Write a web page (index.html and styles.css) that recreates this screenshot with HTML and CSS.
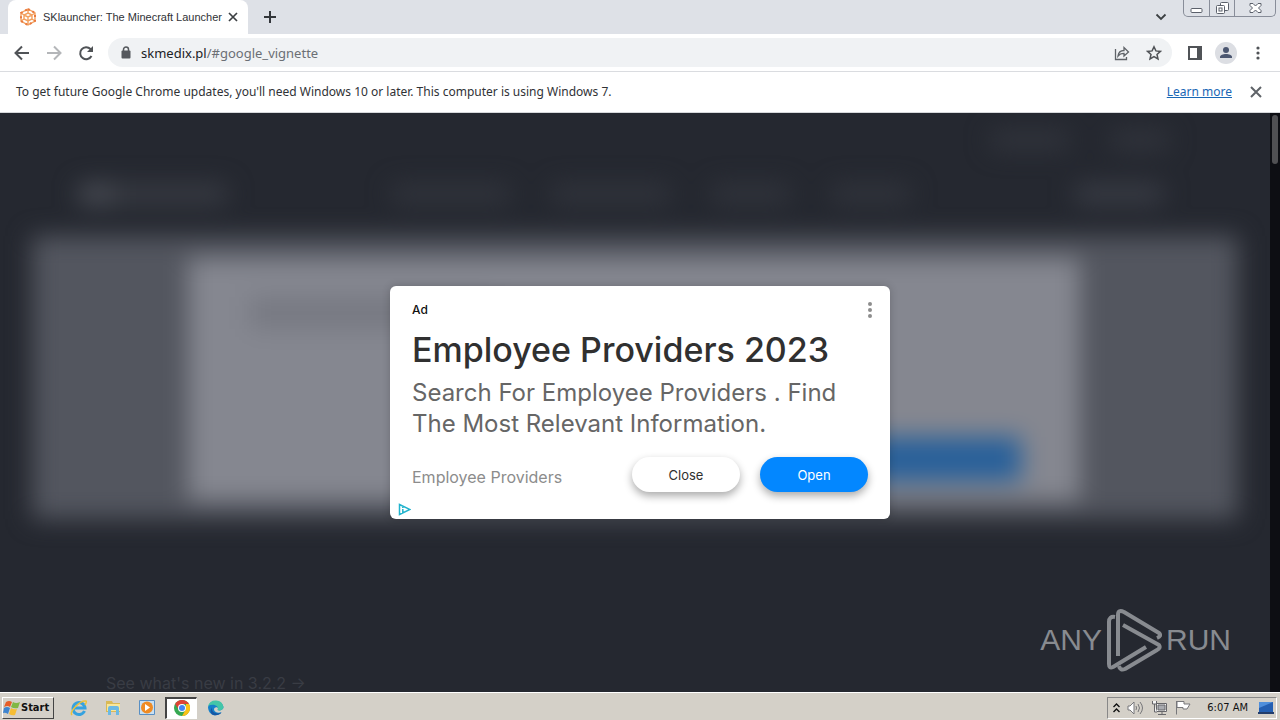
FILE: index.html
```html
<!DOCTYPE html>
<html lang="en">
<head>
<meta charset="utf-8">
<meta name="viewport" content="width=device-width, initial-scale=1">
<title>SKlauncher: The Minecraft Launcher</title>
<link rel="stylesheet" href="styles.css">
</head>
<body>
<header class="tabstrip">
  <div class="tab">
    <svg class="favicon" viewBox="0 0 18 18" width="18" height="18" fill="none" stroke="#f3a15f" stroke-width="1.4"><path d="M9 1l7 4v8l-7 4-7-4V5zM9 5l4 2v4l-4 2-4-2V7zM9 1v4M16 5l-3 2M16 13l-3-2M9 17v-4M2 13l3-2M2 5l3 2M9 9l4-2M9 9L5 7M9 9v4"/><path stroke="#e9793e" stroke-width="2" stroke-dasharray="2 3" d="M9 1l7 4v8l-7 4-7-4V5z"/></svg>
    <span class="tab-title">SKlauncher: The Minecraft Launcher</span>
    <button class="icon-btn" aria-label="Close tab"><svg width="10" height="10" viewBox="0 0 10 10" stroke="#3c4043" stroke-width="1.7"><path d="M1 1l8 8M9 1L1 9"/></svg></button>
  </div>
  <button class="icon-btn new-tab" aria-label="New tab"><svg width="14" height="14" viewBox="0 0 14 14" stroke="#33363b" stroke-width="2"><path d="M7 1v12M1 7h12"/></svg></button>
  <div class="window-tools">
    <button class="icon-btn search-tabs" aria-label="Search tabs"><svg width="12" height="8" viewBox="0 0 12 8" fill="none" stroke="#3c4043" stroke-width="1.8"><path d="M1.500 1.500L6 6l4.500-4.500"/></svg></button>
    <div class="window-controls">
      <button class="win-btn" aria-label="Minimize"><svg width="13" height="16" viewBox="0 0 13 16" fill="#fff" stroke="#5b606b"><rect x="1" y="8.500" width="11" height="4" rx="1"/></svg></button>
      <button class="win-btn" aria-label="Restore"><svg width="13" height="16" viewBox="0 0 13 16" fill="#fff" stroke="#5b606b"><rect x="4.500" y="2.500" width="8" height="8" rx="1"/><rect x=".5" y="5.500" width="8" height="8" rx="1"/><rect x="3" y="8" width="3" height="3"/></svg></button>
      <button class="win-btn win-close" aria-label="Close"><svg width="13" height="16" viewBox="0 0 13 16" fill="#fff" stroke="#5b606b"><path d="M1 3.500h3L6.500 6 9 3.500h3v2L9.500 8l2.500 2.500v2H9L6.500 10 4 12.500H1v-2L3.500 8 1 5.500z"/></svg></button>
    </div>
  </div>
</header>
<nav class="toolbar">
  <button class="icon-btn" aria-label="Back"><svg width="16" height="16" viewBox="0 0 16 16" fill="none" stroke="#505357" stroke-width="2"><path d="M15 8H2M8 1.500L1.500 8 8 14.500"/></svg></button>
  <button class="icon-btn" aria-label="Forward"><svg width="16" height="16" viewBox="0 0 16 16" fill="none" stroke="#b4b6b9" stroke-width="2"><path d="M1 8h13M8 1.500L14.500 8 8 14.500"/></svg></button>
  <button class="icon-btn" aria-label="Reload"><svg width="16" height="16" viewBox="0 0 16 16" fill="none" stroke="#505357" stroke-width="2"><path d="M13.500 11A6 6 0 1 1 12.500 4L14 6"/><path fill="#505357" stroke="none" d="M15 1v6H9z"/></svg></button>
  <div class="omnibox">
    <svg class="lock" width="10" height="13" viewBox="0 0 10 13"><rect y="4.500" x=".5" width="9" height="8" rx="1" fill="#55585d"/><path d="M2.500 5V3.500a2.500 2.500 0 0 1 5 0V5" fill="none" stroke="#55585d" stroke-width="1.500"/></svg>
    <span class="url">skmedix.pl<span class="url-path">/#google_vignette</span></span>
    <button class="icon-btn" aria-label="Share"><svg width="16" height="16" viewBox="0 0 16 16" fill="none" stroke="#5f6368" stroke-width="1.300"><path d="M1.500 4v10.500h11V12M4 11c.5-4 2.500-5.500 6-5.500V2.500L14.500 7 10 11V8.300C7.500 8.300 5.500 9 4 11z"/></svg></button>
    <button class="icon-btn" aria-label="Bookmark"><svg width="16" height="16" viewBox="0 0 16 16" fill="none" stroke="#505357" stroke-width="1.500"><path d="M8 1.800l1.900 4.100 4.500.5-3.400 3 1 4.500L8 11.600l-4 2.300 1-4.500-3.400-3 4.500-.5z"/></svg></button>
  </div>
  <button class="icon-btn" aria-label="Side panel"><svg width="14" height="14" viewBox="0 0 14 14"><path fill="none" stroke="#505357" stroke-width="2" d="M1 1h12v12H1z"/><path fill="#505357" d="M9 1h5v12H9z"/></svg></button>
  <button class="icon-btn profile" aria-label="Profile"><svg width="22" height="22" viewBox="0 0 22 22"><circle cx="11" cy="11" r="11" fill="#dcdee3"/><circle cx="11" cy="8" r="3" fill="#4b5670"/><path fill="#4b5670" d="M5 16v-1c0-2 3-3 6-3s6 1 6 3v1z"/></svg></button>
  <button class="icon-btn" aria-label="Chrome menu"><svg width="4" height="14" viewBox="0 0 4 14" fill="#505357"><circle cx="2" cy="2" r="1.600"/><circle cx="2" cy="7" r="1.600"/><circle cx="2" cy="12" r="1.600"/></svg></button>
</nav>
<aside class="infobar">
  <span class="infobar-text">To get future Google Chrome updates, you'll need Windows 10 or later. This computer is using Windows 7.</span>
  <a href="#">Learn more</a>
  <button class="icon-btn" aria-label="Dismiss"><svg width="12" height="12" viewBox="0 0 12 12" stroke="#5f6368" stroke-width="2"><path d="M1 1l10 10M11 1L1 11"/></svg></button>
</aside>
<main class="viewport">
  <div class="page">
    <div class="page-blur" aria-hidden="true">
      <div class="top-links"><i class="smudge w80"></i><i class="smudge w60"></i></div>
      <div class="site-nav">
        <i class="smudge brand"></i>
        <div class="nav-links"><i class="smudge w120"></i><i class="smudge w120"></i><i class="smudge w80"></i><i class="smudge w80"></i></div>
        <i class="smudge w90"></i>
      </div>
      <section class="hero">
        <div class="hero-card"><i class="hero-title"></i><i class="hero-btn"></i></div>
      </section>
    </div>
    <a class="whats-new" href="#">See what's new in 3.2.2 →</a>
  </div>
  <div class="scrollbar"><div class="thumb"></div></div>
  <div class="vignette">
    <section class="ad" role="dialog" aria-label="Ad">
      <div class="ad-top"><span class="ad-label">Ad</span>
        <button class="icon-btn" aria-label="Ad options"><svg width="4" height="16" viewBox="0 0 4 16" fill="#8d8d8d"><circle cx="2" cy="2" r="2"/><circle cx="2" cy="8" r="2"/><circle cx="2" cy="14" r="2"/></svg></button></div>
      <h1>Employee Providers 2023</h1>
      <p>Search For Employee Providers . Find The Most Relevant Information.</p>
      <div class="ad-actions"><span class="advertiser">Employee Providers</span><button class="pill">Close</button><button class="pill primary">Open</button></div>
      <svg class="adchoices" width="13" height="13" viewBox="0 0 13 13" fill="none" stroke="#21b3cd" stroke-width="1.500"><path d="M1.500 1.500v10L12 6.500zM4.800 6v4M4.800 4v1"/></svg>
    </section>
  </div>
  <div class="watermark">
    <span>ANY</span>
    <svg width="56" height="64" viewBox="0 0 56 64" fill="none" stroke="#888b90" stroke-width="4" stroke-linejoin="round"><path d="M9 9q-6-1-6 5v42q0 5 4 3l33-20"/><path d="M12 48V7q0-6 6-3l35 21q3 3-2 5"/><path d="M17 17l36 20q2 3-2 5L19 61q-5 2-6-3"/></svg>
    <span>RUN</span>
  </div>
</main>
<footer class="taskbar">
  <button class="start"><svg width="17" height="16" viewBox="0 0 17 16"><path fill="#e65d29" d="M3 2q3-2 6 0L7 7Q5 5 1 7z"/><path fill="#80b845" d="M10 2q3 2 7 0l-2 6q-4 1-7-1z"/><path fill="#3e84cf" d="M1 8q3-2 6 0l-2 6q-3-2-5-1z"/><path fill="#f6bd33" d="M8 8q3 2 6 1l-2 6q-3 1-6-1z"/></svg>Start</button>
  <button class="task" aria-label="Internet Explorer"><svg width="18" height="18" viewBox="0 0 18 18" fill="none"><path d="M14.500 12A6 6 0 1 1 15 9H4" stroke="#35a2df" stroke-width="3"/><path d="M2 16C-1 13 10 1 16 2q1 1-1 4" stroke="#edc239" stroke-width="1.500"/></svg></button>
  <button class="task" aria-label="File Explorer"><svg width="17" height="17" viewBox="0 0 17 17"><path fill="#d9b956" d="M1 2h6l1 2h7v9H1z"/><path fill="#f8e69a" d="M2 5h13v7H2z"/><path fill="#6bb9e4" d="M3 9q0-2 2-2h7q2 0 2 2v7h-3v-5H6v5H3z"/></svg></button>
  <button class="task" aria-label="Media Player"><svg width="16" height="17" viewBox="0 0 16 17"><path fill="#c9e0f2" stroke="#588fc4" d="M.5 1.500h15v14H.5z"/><circle cx="8" cy="8.500" r="6" fill="#ef8b24"/><path fill="#fff" d="M6 5l5 3.500L6 12z"/></svg></button>
  <button class="task active" aria-label="Google Chrome"><svg width="16" height="16" viewBox="0 0 16 16"><circle cx="8" cy="8" r="8" fill="#36a852"/><path fill="#de4335" d="M1.100 4A8 8 0 0 1 15 4H8L5 10z"/><path fill="#fbc116" d="M15 4a8 8 0 0 1-7 12l4-7V4z"/><circle cx="8" cy="8" r="4" fill="#fff"/><circle cx="8" cy="8" r="3" fill="#4285f4"/></svg></button>
  <button class="task" aria-label="Microsoft Edge"><svg width="17" height="17" viewBox="0 0 17 17"><path fill="#1580ca" d="M1 8a8 8 0 0 1 15.500 0c0 3-4 4-6 3 2-2-1-4-3-2-2 3 3 6 7 4-3 5-13 5-13.500-5z"/><path fill="#43c6a8" d="M1 7a8 8 0 0 1 15.500 1c0 3-4 4-6 3 2-4-4-7-9.500-4z"/><path fill="#1656a3" d="M5 8c-1 5 4 8 9.500 5.500-3 4-11 4-11-2z"/></svg></button>
  <div class="tray">
    <svg width="7" height="10" viewBox="0 0 7 10" fill="none" stroke="#111" stroke-width="1.400"><path d="M.5 4l3-3 3 3M.5 9l3-3 3 3"/></svg>
    <svg width="17" height="14" viewBox="0 0 17 14" fill="#fff" stroke="#77777a"><path d="M1 5h2l4-4v12L3 9H1z"/><path fill="none" d="M9 5q1 2 0 4M11 3q3 4 0 8M13 1q5 6 0 12"/></svg>
    <svg width="17" height="15" viewBox="0 0 17 15" fill="#f5f5f5" stroke="#66666a"><path d="M5.500 3.500h10v8h-10zM7 14.500h8M11 12v2"/><path fill="#a9abb0" d="M7 5h7v5H7z"/><path d="M1.500 1v3h4V1M3.500 4v8H6"/></svg>
    <svg width="17" height="15" viewBox="0 0 17 15" fill="#fff" stroke="#77777a"><path d="M1.500 1v13.500M2 1.500h7V4h6l-3 5H8V7.500H2z"/></svg>
    <time>6:07 AM</time>
    <svg width="16" height="14" viewBox="0 0 16 14"><path fill="#245fb2" d="M1 1h14v10H1z"/><path fill="#4f8fdc" d="M1 1h14L1 7z"/><path fill="#233d6b" d="M0 11h16v2H0z"/></svg>
  </div>
</footer>
</body>
</html>
```
FILE: styles.css
```css
* { box-sizing: border-box; }
body {
  margin: 0;
  min-height: 100vh;
  display: flex;
  flex-direction: column;
  font: 12px/16px "Noto Sans", sans-serif;
  color: #303236;
}
button { font: inherit; color: inherit; border: 0; background: none; padding: 0; }
svg { display: block; flex: none; }
.icon-btn { display: flex; align-items: center; justify-content: center; flex: none; }

.tabstrip { display: flex; height: 34px; background: #dee1e7; padding-left: 8px; }
.tab {
  display: flex; align-items: center; gap: 6px;
  width: 240px; padding: 0 11px;
  background: #fff; border-radius: 8px 8px 0 0;
}
.tab-title { flex: 1; white-space: nowrap; font-family: "Liberation Sans", sans-serif; font-size: 11px; }
.new-tab { padding: 0 15px; }
.window-tools { margin-left: auto; display: flex; align-items: flex-start; gap: 16px; }
.search-tabs { height: 34px; }
.window-controls {
  display: flex; height: 17px; margin-right: 4px;
  border: 1px solid #888d99; border-top: 0; border-radius: 0 0 5px 5px;
}
.win-btn { width: 25px; display: flex; justify-content: center; }
.win-btn + .win-btn { border-left: 1px solid #888d99; }
.win-btn.win-close { width: 41px; }

.toolbar {
  display: flex; align-items: center; gap: 16px;
  height: 38px; padding: 0 20px 0 14px;
  background: #fff; border-bottom: 1px solid #dadce0;
}
.omnibox {
  flex: 1; display: flex; align-items: center; gap: 16px;
  height: 29px; padding: 0 10px 0 13px; margin-left: -2px;
  background: #f0f2f4; border-radius: 15px;
}
.url { flex: 1; margin-left: -6px; font-size: 13px; color: #202124; }
.url-path { color: #6b6f74; }
.profile { margin: 0 3px 0 -3px; }

.infobar {
  display: flex; align-items: center; gap: 18px;
  height: 41px; padding: 0 18px 0 16px;
  background: #fff; border-bottom: 1px solid #d6d8db;
}
.infobar-text { flex: 1; }
.infobar a { color: #1967b5; }

.viewport { flex: 1; display: flex; position: relative; background: #252830; overflow: hidden; }
.page { flex: 1; display: flex; flex-direction: column; overflow: hidden; }
.page-blur { filter: blur(12px); }
.top-links { display: flex; justify-content: flex-end; gap: 40px; padding: 17px 100px 0 0; }
.smudge { display: block; height: 20px; background: #31343c; border-radius: 8px; }
.w60 { width: 60px; }
.w80 { width: 80px; }
.w90 { width: 90px; background: #393c45; }
.w120 { width: 120px; }
.brand { width: 150px; background: linear-gradient(90deg, #4b4e56 30px, #383b43 40px); }
.site-nav { display: flex; align-items: center; justify-content: space-between; padding: 34px 106px 0 78px; }
.nav-links { display: flex; gap: 40px; }
.hero { margin: 32px 32px 0; padding: 22px 158px 18px 156px; background: #53565f; }
.hero-card {
  display: flex; justify-content: space-between; align-items: flex-start;
  height: 243px; padding: 39px 59px 20px 62px; background: #858790;
}
.hero-title { width: 240px; height: 32px; background: #777982; }
.hero-btn { width: 200px; height: 44px; align-self: flex-end; background: #28609a; }
.whats-new { margin: auto 0 0 106px; font: 16px/18px Inter, sans-serif; color: #393c44; text-decoration: none; }
.scrollbar { width: 10px; padding: 2px; background: #0d0e13; }
.thumb { height: 49px; border-radius: 4px; background: #505053; }

.vignette { position: absolute; inset: 0; display: flex; justify-content: center; align-items: flex-start; padding-top: 173px; }
.ad {
  width: 500px; padding: 14px 18px 3px 22px;
  background: #fff; border-radius: 6px;
  font-family: Inter, sans-serif; color: #303030;
  box-shadow: 0 0 8px #0003;
}
.ad-top { display: flex; justify-content: space-between; align-items: center; height: 20px; }
.ad-label { font-size: 12px; font-weight: 500; color: #111; }
.ad h1 { margin: 8px 0 5px; font-size: 34px; line-height: 44px; font-weight: 500; white-space: nowrap; }
.ad p { margin: 0; font-size: 24px; line-height: 31px; color: #666; }
.ad-actions { display: flex; align-items: center; gap: 20px; margin-top: 18px; padding-right: 4px; }
.advertiser { flex: 1; padding-top: 4px; font-size: 16px; color: #8c8c8c; }
.pill { width: 108px; height: 35px; border-radius: 18px; font-size: 13px; background: #fff; box-shadow: 0 4px 8px #0005; }
.pill.primary { background: #0387ff; color: #fff; }
.adchoices { margin: 11px 0 0 -14px; }

.watermark {
  position: absolute; right: 49px; bottom: 20px;
  display: flex; align-items: center; gap: 4px;
  font: 30px/64px "Liberation Sans Narrow", "Liberation Sans", sans-serif;
  color: #888b90;
}

.taskbar {
  display: flex; align-items: center;
  height: 28px; padding: 3px 3px 1px 2px;
  background: #d4d0c8; border-top: 1px solid #fff;
  color: #111;
}
.start {
  display: flex; align-items: center; gap: 1px;
  height: 22px; width: 52px; margin-right: 8px;
  font: bold 11px/16px "DejaVu Sans Condensed", sans-serif;
  border: 1px solid; border-color: #fff #444 #444 #fff;
}
.task { display: flex; align-items: center; justify-content: center; width: 34px; height: 22px; }
.task.active { background: #fff; border: 1px solid; border-width: 2px 1px 1px 2px; border-color: #444 #fff #fff #444; width: 32px; margin: 0 1px; }
.tray {
  margin-left: auto; display: flex; align-items: center; gap: 7px;
  height: 22px; padding: 0 2px 0 5px;
  border: 1px solid; border-color: #888 #fff #fff #888;
}
.tray time { font: 11px/16px "DejaVu Sans Condensed", sans-serif; margin: 0 3px 0 8px; }
```
